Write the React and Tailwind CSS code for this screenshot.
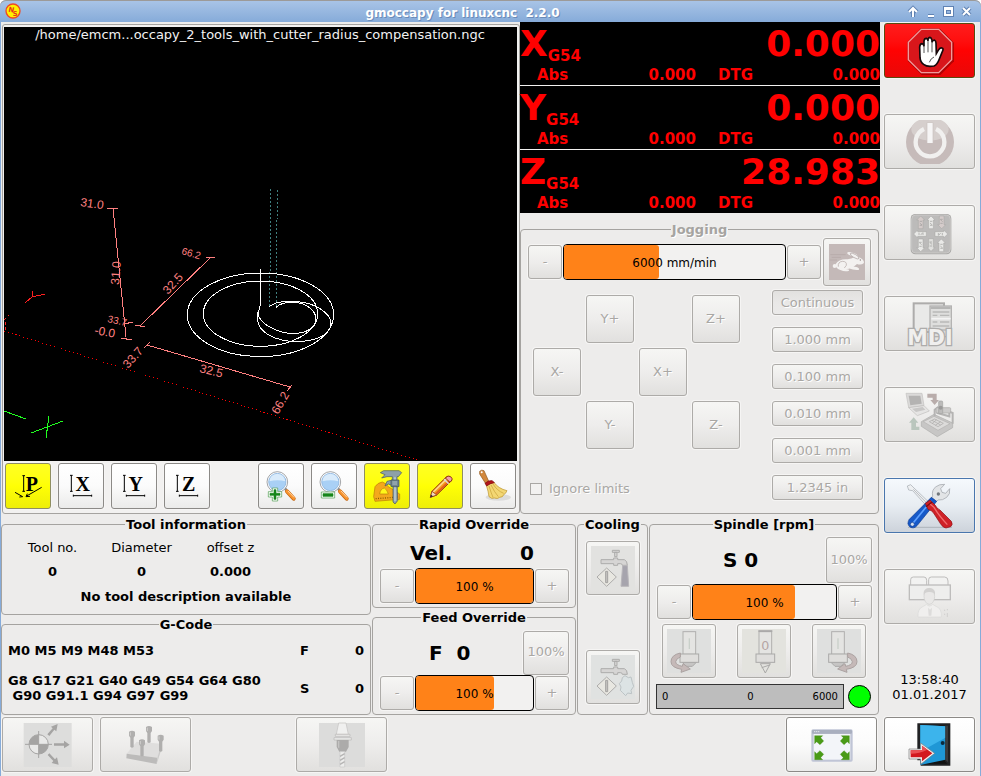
import React, { useState } from "react";
import clsx from "clsx";

const buttonStyles = {
    disabled:
        "border-[#adaba8] bg-linear-to-b from-[#f6f6f4] via-[#eeedec] to-[#e1e0de] text-[#a9a7a4] [text-shadow:1px_1px_0_#fff]",
    pressed:
        "border-[#adaba8] bg-linear-to-b from-[#e2e1df] via-[#e9e8e7] to-[#ebeae9] text-[#a9a7a4] [text-shadow:1px_1px_0_#fff]",
    normal: "border-[#8c8a87] bg-linear-to-b from-white via-[#fbfbfb] to-[#ebebea] text-black",
    yellow: "border-[#8f8e62] bg-linear-to-b from-[#ffff22] via-[#ffff05] to-[#eeee08] text-black",
    focus: "border-[#4a76ad] bg-linear-to-b from-[#f5f9fd] via-[#e8edf2] to-[#cdd3db] text-black",
    red: "border-[#5a4a10] bg-linear-to-b from-[#ff1c1c] via-[#ff0202] to-[#e90808] text-white",
};

const Button = ({ variant = "disabled", className, children, ...props }) => (
    <button
        type="button"
        disabled={variant === "disabled" || variant === "pressed"}
        className={clsx(
            "flex shrink-0 items-center justify-center rounded-[3px] border shadow-[0_0_0_1px_#f6f5f4]",
            buttonStyles[variant],
            className
        )}
        {...props}
    >
        {children}
    </button>
);

const Icon = ({ size = "size-12", box = 144, children }) => (
    <svg viewBox={`0 0 ${box} ${box}`} className={clsx(size, "shrink-0 overflow-visible [text-shadow:none]")} aria-hidden="true">
        {children}
    </svg>
);

const Frame = ({ title, muted, className, children }) => (
    <fieldset className={clsx("flex min-w-0 flex-col rounded-[4px] border border-[#a5a3a0]", className)}>
        <legend className={clsx("mx-auto px-px font-bold leading-[17px]", muted && "text-[#a6a4a1] [text-shadow:1px_1px_0_#fff]")}>
            {title}
        </legend>
        {children}
    </fieldset>
);

// Slider like widget with a minus and a plus button around the value
const SpeedControl = ({ label, text, value, max, className }) => (
    <div className={clsx("flex items-center gap-px", className)}>
        <Button className="size-[34px]" aria-label={`${label} minus`}>-</Button>
        <div
            role="progressbar"
            aria-label={label}
            aria-valuenow={value}
            aria-valuemax={max}
            className="relative h-9 flex-1 overflow-hidden rounded-[4px] border border-black bg-[#f2f1f0]"
        >
            <div className="h-full rounded-r-[3px] bg-[#ff8218]" style={{ width: `${(value / max) * 100}%` }} />
            <span className="absolute inset-0 flex items-center justify-center pt-0.5 text-xs text-black">{text}</span>
        </div>
        <Button className="size-[34px]" aria-label={`${label} plus`}>+</Button>
    </div>
);

/* ---------- icons ---------- */

const StopIcon = () => (
    <Icon>
        <path d="M47 6H103L144 47V103L103 144H47L6 103V47Z" fill="#8b0000" opacity=".6" />
        <path d="M45 4H99L140 45V99L99 140H45L4 99V45Z" fill="#b00d12" />
        <path d="M46 7H98L137 46V98L98 137H46L7 98V46Z" fill="#d8161b" stroke="#f19a9a" strokeWidth="4" />
        <path
            d="M42 92L41 60Q42 50 48 50Q53 51 54 58V42Q55 34 61 34Q66 35 66 42V38Q67 31 72 31Q77 32 78 40V46Q80 39 85 39Q90 41 90 48L91 80L98 68Q104 60 110 64Q113 67 108 76L100 96Q94 113 84 117Q62 120 54 113Q43 106 42 92Z"
            fill="#fff"
            stroke="#16080a"
            strokeWidth="5"
        />
        <path d="M54 56V78M66 42V76M78 44V76M70 106Q74 94 84 90" fill="none" stroke="#333" strokeWidth="2.5" />
    </Icon>
);

const PowerIcon = () => (
    <Icon>
        <clipPath id="powerClip"><rect x="0" y="6" width="144" height="132" /></clipPath>
        <g clipPath="url(#powerClip)">
            <circle cx="72" cy="72" r="72" fill="#c6bbba" />
            <ellipse cx="72" cy="34" rx="56" ry="34" fill="#d6cfcd" />
            <path d="M54 33A43 43 0 1 0 90 33" fill="none" stroke="#f1f0ef" strokeWidth="13" />
            <rect x="62" y="14" width="20" height="62" fill="#c9c0be" />
            <rect x="64" y="15" width="16" height="60" fill="#f6f5f5" />
        </g>
    </Icon>
);

const keyArrows = [
    [44, 40, 0, "#d3cac9"], [75, 40, 0, "#e9e9e7"], [107, 40, 180, "#d5cccb"],
    [42, 75, 270, "#e9e9e7"], [106, 75, 90, "#e9e9e7"],
    [44, 109, 180, "#e9e9e7"], [75, 108, 180, "#e0e0de"], [106, 109, 0, "#e9e9e7"],
];

const ManualIcon = () => (
    <Icon>
        <rect x="14" y="15" width="122" height="121" rx="14" fill="#a9a8a6" />
        <rect x="17" y="18" width="116" height="114" rx="12" fill="#bcbbba" stroke="#d4d3d2" strokeWidth="2" />
        {keyArrows.map(([x, y, r, fill]) => (
            <g key={`${x}-${y}`} transform={`translate(${x} ${y}) rotate(${r})`}>
                <path d="M0-19L12-7H7V19H-7V-7H-12Z" fill={fill} stroke="#a5a4a2" strokeWidth="1.5" />
                <path d="M-3-3H4M-3 2L4 8M-3 9H4" stroke="#9c9b99" strokeWidth="2" />
            </g>
        ))}
    </Icon>
);

const MdiIcon = () => (
    <Icon>
        <rect x="23" y="10" width="91" height="86" fill="#e9e9e8" stroke="#adacab" strokeWidth="6" />
        <rect x="72" y="18" width="64" height="92" fill="#dededd" stroke="#b4b3b2" strokeWidth="4" />
        <rect x="74" y="20" width="60" height="7" fill="#b5b5b4" />
        <path d="M80 36H130M80 46H94M102 46H130M80 66H94M102 66H130M80 78H130M80 90H130" stroke="#b9b9b8" strokeWidth="4" />
        <path d="M76 56H134" stroke="#f4f4f4" strokeWidth="5" />
        <text
            x="72"
            y="134"
            textAnchor="middle"
            fontSize="62"
            fontWeight="bold"
            fill="#f0efee"
            stroke="#adacab"
            strokeWidth="8"
            paintOrder="stroke"
        >
            MDI
        </text>
    </Icon>
);

const AutoIcon = () => (
    <Icon>
        <path d="M0 7H48L54 44L8 50Z" fill="#dbdad9" stroke="#c2c1c0" strokeWidth="2" />
        <path d="M8 14H43L47 38L13 43Z" fill="#b4b3b2" />
        <path d="M8 50L54 44L70 60L34 74Z" fill="#e6e5e4" stroke="#bfbebd" strokeWidth="2" />
        <path d="M18 53L50 48L58 56L30 63Z" fill="#c8c7c6" />
        <path d="M64 8H92V27H99L86 42L73 27H80V20H64Z" fill="#b9adab" />
        <path d="M23 79L37 95H30V107H40V117H16V95H9Z" fill="#bac6bd" />
        <path d="M46 92L84 70L140 96V110L94 137L46 106Z" fill="#c7c6c5" stroke="#aeadac" strokeWidth="2" />
        <path d="M52 92L84 76L132 98L96 118Z" fill="#dcdbda" stroke="#b3b2b1" strokeWidth="2" />
        <path d="M70 92L86 84L112 97L96 107ZM78 88L104 102M92 86L78 98M104 92L88 103" fill="none" stroke="#aaa9a8" strokeWidth="2" />
        <path d="M86 76V56L94 50V66L130 76V62L140 66V98" fill="none" stroke="#b5b4b3" strokeWidth="6" />
        <rect x="90" y="50" width="44" height="16" rx="3" fill="#cccbca" stroke="#aaa9a8" strokeWidth="2" />
        <rect x="98" y="30" width="12" height="38" rx="3" fill="#bcbbba" stroke="#a2a1a0" strokeWidth="2" />
        <circle cx="104" cy="50" r="6" fill="#9b9a99" />
    </Icon>
);

const SettingsIcon = () => (
    <Icon>
        <path d="M6 136H138" stroke="#9ba1a8" strokeWidth="2" />
        <path d="M4 12L14 8L24 18L70 62L62 72L20 26L8 24Z" fill="#eef0f2" stroke="#a2a8ae" strokeWidth="2" />
        <path d="M22 22L66 67" stroke="#9ba0a6" strokeWidth="2" />
        <path d="M80 42Q76 24 90 14Q100 6 116 7L104 20L108 31L119 34L131 20Q134 36 122 46Q110 56 96 54L88 62L74 52Z" fill="#e2e4e6" stroke="#9a9fa5" strokeWidth="2" />
        <circle cx="97" cy="36" r="5" fill="#72777c" />
        <path d="M76 46L92 58L34 130Q24 142 12 135Q1 126 10 112Z" fill="#1659c8" stroke="#0a3a92" strokeWidth="2" />
        <path d="M76 56L22 122" stroke="#5da0ff" strokeWidth="5" />
        <circle cx="19" cy="127" r="6" fill="#d6e2f2" stroke="#0a3a92" strokeWidth="2" />
        <path d="M58 64L72 54L88 70Q92 80 102 84L136 118Q142 128 134 134L120 138Q112 138 104 126L82 92Q78 86 66 82Z" fill="#cf2127" stroke="#8e1015" strokeWidth="2" />
        <path d="M72 66L84 76Q98 100 124 128" fill="none" stroke="#f06f6f" strokeWidth="4" />
        <path d="M60 74L78 60" stroke="#7d0d12" strokeWidth="4" />
    </Icon>
);

const UserIcon = () => (
    <Icon>
        <path d="M14 36V20Q14 12 22 12H54Q62 12 62 22V36M68 36V20Q68 12 76 12H116Q126 12 126 24V36" fill="#f2f2f1" stroke="#bebdbc" strokeWidth="3" />
        <rect x="10" y="36" width="123" height="44" fill="#eeeeed" stroke="#bebdbc" strokeWidth="4" />
        <path d="M36 132Q34 106 52 100L62 94Q70 104 80 94L90 100Q108 106 106 132Z" fill="#f0efee" stroke="#dad9d8" strokeWidth="2" />
        <ellipse cx="70" cy="70" rx="16" ry="24" fill="#e9e8e7" stroke="#cfcecd" strokeWidth="2" />
        <path d="M53 66Q50 46 70 45Q90 46 87 66Q82 56 70 57Q58 56 53 66Z" fill="#d2d1d0" />
        <path d="M66 104L72 110L78 104L76 128H68Z" fill="#dddcdb" />
        <path d="M116 110V114M124 108V112M116 122V126M124 120V132" stroke="#d0cfce" strokeWidth="3" />
    </Icon>
);

const ExitIcon = () => (
    <Icon>
        <path d="M34 7H133V134H44V118H34Z" fill="#202123" />
        <path d="M42 14H116V120L124 128H42Z" fill="#111" />
        <path d="M43 12L118 16V116L43 132Z" fill="#1f97d6" />
        <path d="M43 12L118 16V50L43 92Z" fill="#3cb4ec" />
        <path d="M118 14H126V124L118 116Z" fill="#3a3b3d" />
        <circle cx="110" cy="66" r="6" fill="#0c2a3c" />
        <path d="M9 84H44V66L86 97L44 130V114H9Z" fill="#f3f3f3" stroke="#777" strokeWidth="2" />
        <path d="M14 88H48V74L79 97L48 121V109H14Z" fill="#d3181e" />
        <path d="M14 88H48V74L64 86Q40 98 14 98Z" fill="#ea5054" />
    </Icon>
);

const HomingIcon = () => (
    <Icon>
        <rect x="-1" y="6" width="144" height="132" fill="#dddddc" />
        <circle cx="44" cy="70" r="29" fill="#e9e9e8" stroke="#a5a4a3" strokeWidth="3" />
        <path d="M44 70V41A29 29 0 0 0 15 70ZM44 70V99A29 29 0 0 0 73 70Z" fill="#a5a4a3" />
        <path d="M3 70H84M44 30V111" stroke="#a5a4a3" strokeWidth="3" />
        <path d="M70 40L86 22L81 17L101 9L97 31L91 26L76 45Z" fill="#a5a4a3" />
        <path d="M90 67H120V59L137 71L120 82V74H90Z" fill="#a5a4a3" />
        <path d="M76 97L93 115L99 109L104 131L83 126L88 120L71 102Z" fill="#a5a4a3" />
    </Icon>
);

const ToolTableIcon = () => (
    <Icon>
        <path d="M14 98L44 62L118 68L106 110Z" fill="#dfdedd" />
        <path d="M14 98L106 110L104 129L13 112Z" fill="#bcbbba" />
        <path d="M106 110L118 68L116 92L104 129Z" fill="#cccbca" />
        {[[30, 32], [81, 18], [60, 58], [116, 44]].map(([x, y]) => (
            <g key={x} fill="#b0afae">
                <path d={`M${x - 9} ${y}Q${x} ${y - 6} ${x + 9} ${y}V${y + 12}L${x + 5} ${y + 18}V${y + 46}Q${x} ${y + 50} ${x - 5} ${y + 46}V${y + 18}L${x - 9} ${y + 12}Z`} />
                <path d={`M${x - 5} ${y + 2}V${y + 12}`} stroke="#cfcecd" strokeWidth="3" />
            </g>
        ))}
    </Icon>
);

const ToolChangeIcon = () => (
    <Icon>
        <rect x="3" y="6" width="138" height="132" fill="#dcdcdb" />
        <path d="M62 6L55 40H91L84 6Z" fill="#f0f0ef" stroke="#c2c1c0" strokeWidth="2" />
        <path d="M52 40H96V46H52ZM48 50H100V57H48Z" fill="#eaeae9" stroke="#b9b8b7" strokeWidth="2" />
        <path d="M56 57H92V78L84 92H64L56 78Z" fill="#acabaa" />
        <path d="M62 60V80" stroke="#c4c3c2" strokeWidth="4" />
        <path d="M66 92H80V138H66Z" fill="#ededec" stroke="#c9c8c7" strokeWidth="2" />
        <path d="M66 106L80 98M66 118L80 110M66 130L80 122" stroke="#b5b4b3" strokeWidth="4" />
    </Icon>
);

const FullscreenIcon = () => (
    <Icon>
        <rect x="10" y="25" width="124" height="97" rx="5" fill="#c0c5d6" />
        <rect x="12" y="27" width="120" height="11" rx="3" fill="#a9afbf" />
        <path d="M18 32H34" stroke="#e3e6ee" strokeWidth="3" strokeDasharray="4 2" />
        <rect x="17" y="39" width="110" height="77" fill="#f3f5f9" />
        {[[34, 58, 0], [110, 58, 90], [110, 102, 180], [34, 102, 270]].map(([x, y, r]) => (
            <path
                key={r}
                transform={`translate(${x} ${y}) rotate(${r})`}
                d="M-14-14H10L4-8L13 2L2 13L-8 4L-14 10Z"
                fill="#4a9b17"
                stroke="#3a8510"
                strokeWidth="1"
            />
        ))}
    </Icon>
);

const CoolingIcon = ({ mist }) => (
    <Icon>
        <rect x="6" y="6" width="132" height="132" fill={mist ? "#e0e2e1" : "#e2e2e0"} />
        <g fill="#d6d5d4" stroke="#adacab" strokeWidth="3">
            <path d="M70 19H91V25H70ZM77 25H84V38H77Z" />
            <path d="M36 47H74V42H86V47H106Q115 50 115 64H100Q99 58 94 59H86V64H74V59H36Z" />
            <path d="M53 72L82 99L53 127L24 99Z" fill="#e8e7e1" />
            <path d="M50 82H56V116H50Z" fill="#c6c5c2" stroke="#a3a2a0" />
            {mist ? (
                <path d="M108 68L118 74L126 72L130 88L134 100L126 112L128 122L116 120L110 128L100 118L94 112L96 102L91 92L98 84L100 74Z" fill="#dce3e4" stroke="#bcc3c5" />
            ) : (
                <path d="M101 65H115L119 127H96Z" fill="#a6a4ad" stroke="#b8b6ba" />
            )}
        </g>
    </Icon>
);

const SpindleIcon = ({ mode }) => (
    <Icon>
        <rect x="6" y="6" width="132" height="132" fill={mode === "stop" ? "#e3e3de" : "#dfe0df"} />
        <g transform={mode === "right" ? "translate(-2 0)" : mode === "left" ? "translate(2 0)" : "translate(5 0)"}>
            <rect x="52" y="14" width="38" height="68" fill="#e4e4e2" stroke="#b0afae" strokeWidth="3" />
            {mode === "stop" ? (
                <>
                    <path d="M50 12H92" stroke="#a8a7a6" strokeWidth="5" />
                    <path d="M56 110H86L71 138Z" fill="#e3e3df" stroke="#a9a8a7" strokeWidth="3" />
                    <path d="M60 122L84 114" stroke="#a9a8a7" strokeWidth="3" />
                </>
            ) : (
                <>
                    <path d="M50 106H92L80 118H62Z" fill="#c6c5c4" stroke="#a9a8a7" strokeWidth="3" />
                    <path d="M71 34V66" stroke="#c9d0ca" strokeWidth="4" />
                </>
            )}
            <rect x="43" y="81" width="56" height="25" fill="#dfdedc" stroke="#aaa9a8" strokeWidth="3" />
        </g>
        {mode === "stop" && (
            <text x="76" y="70" textAnchor="middle" fontSize="38" fill="#b5a4a4">0</text>
        )}
        {mode !== "stop" && (
            <g transform={mode === "right" ? "translate(144 0) scale(-1 1)" : undefined}>
                <path d="M46 78Q18 84 18 104Q18 122 50 127L48 136L76 126L54 110L52 118Q32 114 32 104Q34 94 46 90Z" fill="#c5b9b8" stroke="#aba2a1" strokeWidth="3" />
            </g>
        )}
    </Icon>
);

const RabbitIcon = () => (
    <Icon size="size-9" box={108}>
        <rect width="108" height="108" fill="#c4b9b8" />
        <path d="M4 32H50M8 40H36M2 48H24" stroke="#b8acab" strokeWidth="3" />
        <g fill="#f3f1f0">
            <ellipse cx="70" cy="31" rx="16" ry="5" transform="rotate(18 70 31)" />
            <circle cx="17" cy="66" r="6" />
            <path d="M60 66L82 69Q92 72 90 77Q80 80 56 72Z" />
            <path d="M20 60Q30 44 56 46Q68 44 76 40Q90 36 100 46Q107 54 104 58Q96 64 84 60Q76 70 62 72Q60 76 50 75Q62 76 60 80Q48 84 34 78Q18 72 20 60Z" />
            <ellipse cx="77" cy="36" rx="15" ry="5" transform="rotate(30 77 36)" stroke="#b0a4a3" strokeWidth="2" />
        </g>
        <path d="M28 68Q26 54 40 52Q54 52 52 64L46 72" fill="none" stroke="#b0a4a3" strokeWidth="2" />
        <circle cx="94" cy="48" r="2" fill="#8d8180" />
    </Icon>
);

const ViewIcon = ({ axis }) => (
    <Icon size="size-10" box={120}>
        {axis === "P" ? (
            <>
                <path d="M47 29V76M43 29H51M43 76H51" stroke="#000" strokeWidth="3" />
                <path d="M21 79L44 92M44 92L34 93M56 90L101 64M66 91L54 92L58 83" fill="none" stroke="#000" strokeWidth="3" />
                <text x="53" y="75" fontSize="60" fontWeight="bold" fill="#000" className="font-['Liberation_Serif',serif]">P</text>
            </>
        ) : (
            <>
                <path d="M31 28V76M27 28H35M27 76H35" stroke="#000" strokeWidth="3" />
                <path d="M37 89H92M37 86V92M92 86V92" stroke="#000" strokeWidth="3" />
                <text x="65" y="75" textAnchor="middle" fontSize="60" fontWeight="bold" fill="#000" className="font-['Liberation_Serif',serif]">{axis}</text>
            </>
        )}
    </Icon>
);

const ZoomIcon = ({ out }) => (
    <Icon size="size-10" box={120}>
        <path d="M66 62L76 72" stroke="#8a8d90" strokeWidth="8" />
        <path d="M78 76L98 98" stroke="#c4650f" strokeWidth="12" strokeLinecap="round" />
        <path d="M78 76L98 97" stroke="#f8942f" strokeWidth="9" strokeLinecap="round" />
        <path d="M81 75L99 94" stroke="#ffd2a0" strokeWidth="3" />
        <circle cx="49" cy="48" r="31" fill="#fff" stroke="#75797d" strokeWidth="2" />
        <circle cx="49" cy="48" r="26" fill="#a9d0f5" stroke="#7fa9d6" strokeWidth="2" />
        <path d="M25 46Q27 25 49 23Q71 25 73 46Q50 40 25 46Z" fill="#d9ebfb" />
        {out ? (
            <path d="M22 78H62V96H22Z" fill="#fff" stroke="#4a9c4c" strokeWidth="2" />
        ) : (
            <path d="M34 66H50V77H62V93H50V105H34V93H22V77H34Z" fill="#fff" stroke="#4a9c4c" strokeWidth="2" />
        )}
        <path d={out ? "M27 83H57V91H27Z" : "M39 71H45V82H57V88H45V100H39V88H27V82H39Z"} fill="#17861b" stroke="#17861b" strokeWidth="2" />
    </Icon>
);

const MeasureIcon = () => (
    <Icon size="size-10" box={120}>
        <path d="M20 92L24 62Q32 50 46 48Q58 52 64 62L98 84V100L24 106Z" fill="#f4a81c" stroke="#b97b08" strokeWidth="2" />
        <path d="M38 84Q40 68 52 66Q60 70 64 84Z" fill="#fff71a" stroke="#b97b08" strokeWidth="2" />
        <path d="M26 98L96 93" stroke="#8a5b06" strokeWidth="4" strokeDasharray="3 4" />
        <path d="M40 20L50 14H96L104 20L94 32H90L92 104L84 114L78 108V60L64 54L54 60L60 46L76 42V32H60L44 36L54 26Z" fill="#8da0a8" stroke="#47565d" strokeWidth="2" />
        <path d="M84 34V106" stroke="#c6d4da" strokeWidth="4" />
        <path d="M72 42H96V62H72Z" fill="#718790" stroke="#3f4f56" strokeWidth="2" />
        <path d="M76 48H90M76 54H90" stroke="#d2dee3" strokeWidth="2" />
    </Icon>
);

const PencilIcon = () => (
    <Icon size="size-10" box={120}>
        <path d="M31 94L36 76L80 32L94 44L50 87Z" fill="#f59a1e" stroke="#8f2f12" strokeWidth="3" />
        <path d="M40 78L84 35" stroke="#ffd98c" strokeWidth="5" />
        <path d="M47 84L91 42" stroke="#e2571b" strokeWidth="5" />
        <path d="M31 94L36 76L50 87Z" fill="#f3dcbb" stroke="#8f2f12" strokeWidth="2" />
        <path d="M31 94L33 86L39 91Z" fill="#222" />
        <path d="M76 36L84 30Q98 32 96 42L90 49Z" fill="#f0a0a8" stroke="#8f2f12" strokeWidth="3" />
        <path d="M72 40L86 53" stroke="#d8dadc" strokeWidth="4" />
    </Icon>
);

const BroomIcon = () => (
    <Icon size="size-10" box={120}>
        <ellipse cx="76" cy="94" rx="38" ry="10" fill="#dcdcdb" />
        <path d="M20 16Q26 10 33 14L48 48L38 53L20 24Z" fill="#d2883c" stroke="#8f5518" strokeWidth="2" />
        <circle cx="26" cy="19" r="3" fill="#fff" />
        <path d="M40 58L62 48Q76 68 102 74Q98 84 92 86Q90 94 80 94Q74 100 64 96Q56 100 48 92Q46 76 40 58Z" fill="#f3d774" stroke="#b8912a" strokeWidth="2" />
        <path d="M48 60Q54 80 60 94M54 57Q64 78 76 92M60 54Q72 74 92 82" fill="none" stroke="#c69e36" strokeWidth="2" />
        <path d="M36 52Q46 42 58 44L64 50Q50 52 41 60Z" fill="#b3151b" stroke="#7c0a0e" strokeWidth="2" />
    </Icon>
);

/* ---------- panels ---------- */

const windowGlyphs = [
    ["Shade", "M9 5V14M5 9L9 5L13 9"],
    ["Minimize", "M6 13H12"],
    ["Maximize", "M5 5H12V12H5ZM5 6H12"],
    ["Close", "M5 5L12 12M12 5L5 12"],
];

const TitleBar = () => (
    <header className="flex h-[22px] items-center rounded-t-md bg-linear-to-b from-[#aac5e7] to-[#86abd9] px-[5px] shadow-[inset_0_1px_0_#9c9a98]">
        <svg viewBox="0 0 48 48" className="size-4" aria-hidden="true">
            <circle cx="24" cy="24" r="21" fill="#fff200" stroke="#f04a23" strokeWidth="4" />
            <text x="10" y="27" fontSize="21" fontWeight="bold" fill="#e8361a" transform="rotate(12 18 20)">N</text>
            <text x="23" y="38" fontSize="20" fontWeight="bold" fill="#e8361a">S</text>
        </svg>
        <h1 className="flex-1 whitespace-pre pt-1 text-center text-xs font-bold text-white [text-shadow:1px_1px_0_#6a8bb8]">gmoccapy for linuxcnc  2.2.0</h1>
        <div className="flex">
            {windowGlyphs.map(([name, d]) => (
                <button key={name} type="button" aria-label={name} className="w-[18px] pt-0.5">
                    <svg viewBox="0 0 18 18" className="size-[18px]" fill="none">
                        <path d={d} stroke="#5f82b3" strokeWidth="4" />
                        <path d={d} stroke="#fff" strokeWidth="2" />
                    </svg>
                </button>
            ))}
        </div>
    </header>
);

const dimensionLabels = [
    ["31.0", 80, 206, 8], ["66.2", 181, 254, 16], ["31.0", 119, 285, -86], ["32.5", 168, 295, -48],
    ["33.7", 107, 322, 12], ["-0.0", 94, 334, 10], ["33.7", 128, 369, -48], ["32.5", 199, 372, 14],
    ["66.2", 278, 415, -60],
];

const Preview = () => (
    <div className="min-h-[300px] flex-1 bg-black">
        <svg viewBox="4 27 513 434" className="block size-full" role="img" aria-label="Tool path preview" fill="none" shapeRendering="crispEdges">
            <text x="260" y="39" textAnchor="middle" fontSize="13" fill="#f2f2f2">
                /home/emcm...occapy_2_tools_with_cutter_radius_compensation.ngc
            </text>
            <g stroke="#ff8080">
                <path d="M107 208L118 209M113 208L126 337M121 338L132 340" />
                <path d="M206 257L215 258M210 258L140 326M135 325L145 327" />
                <path d="M144 348L150 342M147 345L290 387M287 391L292 385" />
                <path d="M124 324L133 322" />
            </g>
            <g fill="#ff8080" className="font-['Liberation_Sans',sans-serif]">
                {dimensionLabels.map(([text, x, y, angle]) => (
                    <text
                        key={`${x}-${y}`}
                        x={x}
                        y={y}
                        fontSize={angle === 16 || angle === 12 ? 10 : 12}
                        transform={`rotate(${angle} ${x} ${y})`}
                    >
                        {text}
                    </text>
                ))}
            </g>
            <g stroke="#ff2020">
                <path d="M32 291V297L25 303M32 297L45 294" />
                <path d="M4 320L9 315M5 322V331" strokeDasharray="3 2" />
                <path d="M4 331L420 461" strokeDasharray="1 3" stroke="#f00" />
            </g>
            <path d="M4 411L26 419M31 433L63 421M49 416L46 438" stroke="#20ff20" />
            <path d="M270.5 189V271M269.5 272V307M277.5 190V219M276.5 220V308" stroke="#408080" strokeDasharray="2 2" />
            <g stroke="#fff">
                <ellipse cx="260.5" cy="314.8" rx="73.2" ry="41.8" />
                <ellipse cx="260.5" cy="313.7" rx="57.2" ry="32.7" />
                <path d="M260.5 269V306" />
                <path d="M276 307.500C280 303.500 287 302 293 302C307 303 316 311 316 319C315 329 305 333.500 293 333.500C277 333 260 324 258 314L260 306" />
                <path d="M269.500 306.500C274 302.500 284 301 294 301.500C315 302 330.500 313 331 323.500C330 336 314 341.500 297 341.500C275 341.500 257.500 332 257.500 319V312" />
            </g>
        </svg>
    </div>
);

const PreviewToolbar = () => {
    const [view, setView] = useState("P");
    const [dimensions, setDimensions] = useState(true);
    const [toolPath, setToolPath] = useState(true);

    return (
        <div className="flex justify-between px-px pb-1 pt-0.5">
            <div className="flex gap-[7px]">
                {["P", "X", "Y", "Z"].map((axis) => (
                    <Button
                        key={axis}
                        variant={view === axis ? "yellow" : "normal"}
                        className="size-[46px]"
                        aria-label={`View ${axis}`}
                        onClick={() => setView(axis)}
                    >
                        <ViewIcon axis={axis} />
                    </Button>
                ))}
            </div>
            <div className="flex gap-[7px]">
                <Button variant="normal" className="size-[46px]" aria-label="Zoom in"><ZoomIcon /></Button>
                <Button variant="normal" className="size-[46px]" aria-label="Zoom out"><ZoomIcon out /></Button>
                <Button
                    variant={dimensions ? "yellow" : "normal"}
                    className="size-[46px]"
                    aria-label="Dimensions"
                    onClick={() => setDimensions(!dimensions)}
                >
                    <MeasureIcon />
                </Button>
                <Button
                    variant={toolPath ? "yellow" : "normal"}
                    className="size-[46px]"
                    aria-label="Tool path"
                    onClick={() => setToolPath(!toolPath)}
                >
                    <PencilIcon />
                </Button>
                <Button variant="normal" className="size-[46px]" aria-label="Clear plot"><BroomIcon /></Button>
            </div>
        </div>
    );
};

const axes = [
    { name: "X", value: "0.000", abs: "0.000", dtg: "0.000" },
    { name: "Y", value: "0.000", abs: "0.000", dtg: "0.000" },
    { name: "Z", value: "28.983", abs: "0.000", dtg: "0.000" },
];

const Dro = () => (
    <div className="flex flex-col gap-px bg-[#f2f1f0]">
        {axes.map((axis) => (
            <div key={axis.name} className="bg-black text-[15px] font-bold text-[#ff0000]">
                <div className="flex justify-between text-4xl/[44px]">
                    <span>
                        {axis.name}
                        <span className="align-[-5px] text-[15px]/[15px]">G54</span>
                    </span>
                    <span>{axis.value}</span>
                </div>
                <div className="grid grid-cols-2 leading-[19px]">
                    <div className="flex justify-between pl-[17px] pr-1">
                        <span>Abs</span>
                        <span>{axis.abs}</span>
                    </div>
                    <div className="flex justify-between pl-[18px]">
                        <span>DTG</span>
                        <span>{axis.dtg}</span>
                    </div>
                </div>
            </div>
        ))}
    </div>
);

const jogKeys = [null, "Y+", null, "Z+", "X-", null, "X+", null, null, "Y-", null, "Z-"];
const increments = ["Continuous", "1.000 mm", "0.100 mm", "0.010 mm", "0.001 mm", "1.2345 in"];

const Jogging = () => (
    <Frame title="Jogging" muted className="mr-px mt-2 flex-1">
        <div className="flex items-center gap-0.5 px-[7px]">
            <SpeedControl label="Jog speed" text="6000 mm/min" value={43} max={100} className="flex-1" />
            <Button className="size-12" aria-label="Rabbit"><RabbitIcon /></Button>
        </div>
        <div className="flex flex-1 justify-between pb-3 pl-[9px] pr-[15px] pt-1">
            <div className="flex flex-col justify-between">
                <div className="grid grid-cols-4 gap-[5px] pl-[3px] pt-[5px]">
                    {jogKeys.map((key, i) =>
                        key ? <Button key={i} className="size-12">{key}</Button> : <span key={i} />
                    )}
                </div>
                <label className="flex items-center gap-[7px] pb-1 leading-[17px] text-[#a9a7a4] [text-shadow:1px_1px_0_#fff]">
                    <input type="checkbox" disabled className="size-3 appearance-none border border-[#a9a7a4] bg-[#f2f1f0]" />
                    Ignore limits
                </label>
            </div>
            <div className="flex flex-col gap-3">
                {increments.map((label, i) => (
                    <Button key={label} variant={i === 0 ? "pressed" : "disabled"} className="h-[25px] w-[91px]">
                        {label}
                    </Button>
                ))}
            </div>
        </div>
    </Frame>
);

const ToolInfo = () => (
    <Frame title="Tool information">
        <table className="ml-1.5 mt-[3px] w-[267px] table-fixed text-center leading-6">
            <thead>
                <tr>
                    <th className="font-normal">Tool no.</th>
                    <th className="font-normal">Diameter</th>
                    <th className="font-normal">offset z</th>
                </tr>
            </thead>
            <tbody>
                <tr className="font-bold">
                    <td>0</td>
                    <td>0</td>
                    <td>0.000</td>
                </tr>
            </tbody>
        </table>
        <p className="pb-[5px] pt-px text-center font-bold leading-6">No tool description available</p>
    </Frame>
);

const GCode = () => (
    <Frame title="G-Code" className="flex-1">
        <div className="flex flex-1 flex-col gap-[15px] px-1.5 pb-2.5 pt-2.5 font-bold leading-[15px]">
            <div className="flex items-center">
                <span className="flex-1">M0 M5 M9 M48 M53</span>
                <span className="w-8">F</span>
                <span className="w-8 text-right">0</span>
            </div>
            <div className="flex items-center">
                <span className="flex-1 whitespace-pre">{"G8 G17 G21 G40 G49 G54 G64 G80\n G90 G91.1 G94 G97 G99"}</span>
                <span className="w-8">S</span>
                <span className="w-8 text-right">0</span>
            </div>
        </div>
    </Frame>
);

const Overrides = () => (
    <div className="flex w-[204px] flex-col gap-px">
        <Frame title="Rapid Override">
            <div className="flex h-[35px] items-center justify-between pl-[37px] pr-[41px] pt-1 text-xl font-bold">
                <span>Vel.</span>
                <span>0</span>
            </div>
            <SpeedControl label="Rapid override" text="100 %" value={100} max={100} className="pb-[3px] pl-[7px] pr-1.5" />
        </Frame>
        <Frame title="Feed Override" className="flex-1">
            <div className="flex h-[49px] items-center pl-14 pr-1.5 pt-1 text-xl font-bold">
                <span className="whitespace-pre">F  0</span>
                <Button className="ml-auto h-11 w-[46px] text-[13px] font-normal">100%</Button>
            </div>
            <SpeedControl label="Feed override" text="100 %" value={67} max={100} className="pb-[3px] pl-[7px] pr-1.5" />
        </Frame>
    </div>
);

const Spindle = () => (
    <Frame title="Spindle [rpm]" className="w-[230px]">
        <div className="flex items-center pb-px pl-[73px] pr-1.5 pt-1 text-xl font-bold">
            <span>S 0</span>
            <Button className="ml-auto size-[46px] text-[13px] font-normal">100%</Button>
        </div>
        <SpeedControl label="Spindle override" text="100 %" value={71} max={100} className="pl-[7px] pr-1.5" />
        <div className="flex justify-between px-3 pt-1">
            <Button className="size-[54px]" aria-label="Spindle left"><SpindleIcon mode="left" /></Button>
            <Button className="size-[54px]" aria-label="Spindle stop"><SpindleIcon mode="stop" /></Button>
            <Button className="size-[54px]" aria-label="Spindle right"><SpindleIcon mode="right" /></Button>
        </div>
        <div className="flex items-center gap-0.5 px-1.5 pb-[5px] pt-1.5">
            <div className="flex h-[25px] flex-1 items-center justify-between border border-[#333] bg-[#bdbdbd] px-[5px] text-[10px]">
                <span>0</span>
                <span className="pl-5">0</span>
                <span>6000</span>
            </div>
            <div className="flex w-[26px] justify-center">
                <span className="size-[23px] rounded-full border border-black bg-[#00ff00]" />
            </div>
        </div>
    </Frame>
);

const Sidebar = () => (
    <nav className="flex w-[100px] shrink-0 flex-col gap-9 pb-1.5 pl-1 pr-[5px] pt-px">
        <Button variant="red" className="h-[55px] w-full" aria-label="Emergency stop"><StopIcon /></Button>
        <Button className="h-[55px] w-full" aria-label="Machine on"><PowerIcon /></Button>
        <Button className="h-[55px] w-full" aria-label="Manual mode"><ManualIcon /></Button>
        <Button className="h-[55px] w-full" aria-label="MDI mode"><MdiIcon /></Button>
        <Button className="h-[55px] w-full" aria-label="Auto mode"><AutoIcon /></Button>
        <Button variant="focus" className="h-[55px] w-full" aria-label="Settings"><SettingsIcon /></Button>
        <Button className="h-[55px] w-full" aria-label="User tabs"><UserIcon /></Button>
        <div className="mt-auto">
            <p className="pb-[15px] text-center leading-[15px]">
                13:58:40
                <br />
                01.01.2017
            </p>
            <Button variant="normal" className="h-[55px] w-full" aria-label="Exit"><ExitIcon /></Button>
        </div>
    </nav>
);

const BottomBar = () => (
    <div className="grid grid-cols-9 gap-[7px] pb-1.5 pl-px pr-[3px]">
        <Button className="h-[55px]" aria-label="Homing"><HomingIcon /></Button>
        <Button className="h-[55px]" aria-label="Touch off"><ToolTableIcon /></Button>
        <Button className="col-start-4 h-[55px]" aria-label="Tool change"><ToolChangeIcon /></Button>
        <Button variant="normal" className="col-start-9 h-[55px]" aria-label="Fullscreen"><FullscreenIcon /></Button>
    </div>
);

const App = () => {
    return (
        <div className="flex min-h-screen w-full flex-col bg-white font-['DejaVu_Sans',sans-serif] text-[13px] text-black">
            <TitleBar />
            <div className="flex flex-1 border-x border-b border-[#86abd9] bg-[#edeceb]">
                <main className="flex min-w-0 flex-1 flex-col gap-0.5">
                    <div className="flex flex-1">
                        <div className="ml-px mt-0.5 flex min-w-0 flex-1 flex-col rounded-[3px] border border-[#a5a3a0] bg-[#f2f1f0] pl-px pr-0.5 pt-0.5">
                            <Preview />
                            <PreviewToolbar />
                        </div>
                        <div className="flex w-[360px] flex-col">
                            <Dro />
                            <Jogging />
                        </div>
                    </div>
                    <div className="mr-px flex gap-px">
                        <div className="flex min-w-0 flex-1 flex-col gap-px">
                            <ToolInfo />
                            <GCode />
                        </div>
                        <Overrides />
                        <Frame title="Cooling" className="w-[71px]">
                            <div className="flex flex-1 flex-col items-center justify-between pb-2.5 pt-2">
                                <Button className="size-[54px]" aria-label="Flood"><CoolingIcon /></Button>
                                <Button className="size-[54px]" aria-label="Mist"><CoolingIcon mist /></Button>
                            </div>
                        </Frame>
                        <Spindle />
                    </div>
                    <BottomBar />
                </main>
                <Sidebar />
            </div>
        </div>
    );
};

export default App;
